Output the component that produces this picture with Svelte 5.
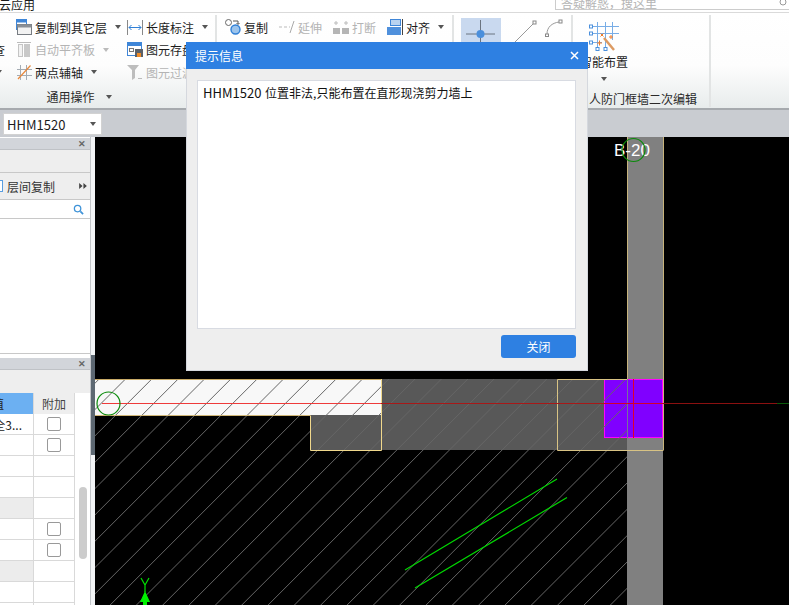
<script>
  // hatch lines of the floor slab, x + y = const
  const hatch = [];
  for (let c = 583.500 - 26.330 * 8; c < 1250; c += 26.330) hatch.push(c);

  const rows = [
    { check: true, text: '全3...' },
    { check: true },
    {},
    {},
    { shade: true },
    { check: true },
    { check: true },
    { shade: true },
    {},
    {}
  ];
</script>

<div class="app">
  <header class="titlebar">
    <span class="app-name">云应用</span>
    <div class="search">
      <span>答疑解惑，搜这里</span>
      <svg class="search-ico" viewBox="0 0 10 10"><circle cx="4" cy="2" r="3" fill="none" stroke="#999" /></svg>
    </div>
  </header>

  <section class="ribbon">
    <div class="group g1">
      <div class="g1-grid">
        <span></span>
        <div class="item">
          <svg class="ico" viewBox="0 0 16 16"><rect x="0.500" y="0.500" width="10" height="10" fill="#fff" stroke="#3f86d8" /><rect x="0.500" y="0.500" width="10" height="3" fill="#3f86d8" /><rect x="1.500" y="5.500" width="14" height="10" fill="#f2f2f2" stroke="#777c82" /><rect x="1.500" y="5.500" width="14" height="3" fill="#8a8f96" /></svg>
          <span>复制到其它层</span><i class="caret"></i>
        </div>
        <div class="item">
          <svg class="ico" viewBox="0 0 16 16"><path d="M0.500 1v15M15.500 1v15" stroke="#888" fill="none" /><path d="M2 8.500h12M4.500 6l-2.500 2.500 2.500 2.500M11.500 6l2.500 2.500-2.500 2.500" stroke="#2f7fd6" fill="none" /></svg>
          <span>长度标注</span><i class="caret"></i>
        </div>

        <span class="stray">查</span>
        <div class="item off">
          <svg class="ico" viewBox="0 0 16 16"><path d="M1 0.500h14" stroke="#bbb" /><rect x="2.500" y="2.500" width="4" height="12" fill="#f2f2f2" stroke="#c4c4c4" /><rect x="8" y="2" width="6" height="13" fill="#c8c8c8" /></svg>
          <span>自动平齐板</span><i class="caret light"></i>
        </div>
        <div class="item">
          <svg class="ico" viewBox="0 0 16 16"><rect x="0.500" y="0.500" width="14" height="13" fill="#fff" stroke="#3f86d8" /><rect x="0.500" y="0.500" width="14" height="3.500" fill="#3f86d8" /><rect x="2.500" y="6.500" width="4" height="3" fill="#fff" stroke="#777" /><rect x="8" y="7" width="8" height="8" fill="#5a6068" /><rect x="10" y="11" width="4" height="4" fill="#f08a24" /></svg>
          <span>图元存盘</span>
        </div>

        <span class="stray-caret"><i class="caret"></i></span>
        <div class="item">
          <svg class="ico" viewBox="0 0 16 16"><path d="M1 5.500h15M1 11.500h15M4.500 1v15M10.500 1v15" stroke="#a4acb4" fill="none" /><path d="M2 15L14.500 1.500" stroke="#e8873a" fill="none" stroke-width="1.200" /></svg>
          <span>两点辅轴</span><i class="caret"></i>
        </div>
        <div class="item off">
          <svg class="ico" viewBox="0 0 16 16"><path d="M0 1h12L8 6v8L5 16V6z" fill="#bdbdbd" /><path d="M11 14.500h4" stroke="#bbb" /></svg>
          <span>图元过滤</span>
        </div>
      </div>
      <div class="group-label label-g1">通用操作<i class="caret"></i></div>
    </div>

    <div class="group g2">
      <div class="g2-row">
        <div class="item">
          <svg class="ico" viewBox="0 0 16 16"><circle cx="3.500" cy="3.500" r="3" fill="#fff" stroke="#666" /><circle cx="10.500" cy="10.500" r="4.500" fill="#9cc4ec" stroke="#2f7fd6" stroke-width="1.400" /><path d="M8 2h5v3M11.500 4l1.500 1.500 1.500-1.500" fill="none" stroke="#555" /></svg>
          <span>复制</span>
        </div>
        <div class="item off">
          <svg class="ico" viewBox="0 0 16 16"><path d="M0 8h3M5 8h3M10 8h1" stroke="#bbb" /><path d="M11 14L15 2" stroke="#aaa" /></svg>
          <span>延伸</span>
        </div>
        <div class="item off">
          <svg class="ico" viewBox="0 0 16 16"><rect x="0" y="9" width="7" height="6" fill="#b5b5b5" /><rect x="9" y="9" width="7" height="6" fill="#b5b5b5" /><path d="M3 2v4M13 2v4M1 4h4M11 4h4" stroke="#bbb" /></svg>
          <span>打断</span>
        </div>
        <div class="item">
          <svg class="ico" viewBox="0 0 16 16"><rect x="3.500" y="0.500" width="10" height="6" fill="#b9d3f0" stroke="#3f86d8" /><rect x="0" y="8" width="14" height="8" fill="#4f90dc" /><path d="M15.500 0v16" stroke="#444" /></svg>
          <span>对齐</span><i class="caret"></i>
        </div>
      </div>
    </div>

    <div class="group g3">
      <div class="snap">
        <svg class="snap-ico" viewBox="0 0 40 26"><path d="M5 16h29M19.500 2v22" stroke="#6b7480" fill="none" /><circle cx="19.500" cy="16" r="4" fill="#4a8fdc" /></svg>
      </div>
      <svg class="line-ico" viewBox="0 0 24 24"><path d="M1 23L20 4" stroke="#999" fill="none" /><rect x="20" y="1" width="3" height="3" fill="#fff" stroke="#888" /></svg>
      <svg class="arc-ico" viewBox="0 0 18 18"><path d="M2 15C2 8 7 4 14 3" stroke="#999" fill="none" /><rect x="0.500" y="15" width="3" height="2.500" fill="#fff" stroke="#888" /><rect x="14" y="1" width="3" height="3" fill="#fff" stroke="#888" /></svg>
    </div>

    <div class="group g4">
      <div class="big">
        <svg class="big-ico" viewBox="0 0 30 30">
          <path d="M8.500 0v26M16.500 0v26M23.500 0v18M3 4.500h27M3 11.500h27M3 20.500h10" stroke="#78ade6" fill="none" />
          <g fill="#fff" stroke="#4a8fdc"><rect x="0.500" y="3" width="3" height="3" /><rect x="0.500" y="10" width="3" height="3" /><rect x="0.500" y="19" width="3" height="3" /><rect x="7" y="25.500" width="3" height="3" /><rect x="15" y="25.500" width="3" height="3" /></g>
          <path d="M15 16L25 28" stroke="#dc9a62" stroke-width="2.500" />
          <path d="M11.500 14.500l3-3M11.500 11.500l3 3M8 21h5M10.500 18.500v5M20 15h4M22 13v4" stroke="#ef7d2a" fill="none" />
        </svg>
        <span>智能布置</span>
        <i class="caret"></i>
      </div>
      <div class="group-label label-g4">人防门框墙二次编辑</div>
    </div>
  </section>

  <div class="combo-bar">
    <div class="combo"><span>HHM1520</span><i class="caret"></i></div>
  </div>

  <main class="main">
    <aside class="side">
      <div class="panel-top">
        <div class="panel-head"><span class="close-x">✕</span></div>
        <div class="grey-row"></div>
        <div class="tool-row">
          <span class="tool-check"></span>
          <span>层间复制</span>
          <svg class="more" viewBox="0 0 9 7"><path d="M0 0l4 3.500-4 3.500zM5 0l4 3.500-4 3.500z" fill="#444" /></svg>
        </div>
        <div class="filter">
          <svg class="filter-ico" viewBox="0 0 12 12"><circle cx="5" cy="5" r="3.500" fill="none" stroke="#3f93d8" stroke-width="1.400" /><path d="M8 8l3 3" stroke="#3f93d8" stroke-width="1.800" /></svg>
        </div>
        <div class="list"></div>
      </div>
      <div class="panel-gap"></div>
      <div class="panel-bottom">
        <div class="panel-head"><span class="close-x">✕</span></div>
        <div class="grey-row short"></div>
        <div class="table-wrap">
          <div class="table">
            <div class="cell th-blue"><span class="val">值</span></div>
            <div class="cell th">附加</div>
            {#each rows as row}
              <div class="cell" class:shade={row.shade}><span class="val">{row.text ?? ''}</span></div>
              <div class="cell center">
                {#if row.check}<span class="check"></span>{/if}
              </div>
            {/each}
          </div>
          <div class="scroll-track"><div class="scroll-thumb"></div></div>
        </div>
      </div>
    </aside>
    <div class="splitter"><div class="splitter-grip"></div></div>

    <div class="canvas">
      <svg class="cad" viewBox="95 137 694 468">
        <defs>
          <clipPath id="hatch-clip"><rect x="95" y="379" width="532" height="226" /></clipPath>
        </defs>

        <rect x="627" y="137" width="36" height="468" fill="#808080" />
        <path d="M627.500 137V379M663.500 137V450" stroke="#c8b47c" fill="none" />

        <rect x="95" y="379" width="286" height="36" fill="#f8f8f8" />
        <rect x="381" y="379" width="246" height="71" fill="#585858" />
        <rect x="310" y="415" width="71" height="35" fill="#585858" />
        <rect x="604.500" y="379.500" width="58" height="58" fill="#8000ff" stroke="#ff00ff" />

        <g clip-path="url(#hatch-clip)" stroke="#666" fill="none">
          {#each hatch as c}
            <line x1={c - 379} y1="379" x2={c - 605} y2="605" />
          {/each}
        </g>

        <path d="M95 379.500H381" stroke="#c9ab68" fill="none" />
        <path d="M95 415.500H310" stroke="#d0b676" fill="none" />
        <path d="M310.500 415.500V450.500H381.500V379" stroke="#f0d88c" fill="none" />
        <path d="M557.500 450.500V379.500H627M557.500 450.500H663.500" stroke="#d8c384" fill="none" />
        <path d="M627.500 379V438" stroke="#77719a" fill="none" />
        <path d="M633.500 379V438" stroke="#e0002a" fill="none" />
        <path d="M102 403.500H381" stroke="#ee3a3a" fill="none" />
        <path d="M381 403.500H604" stroke="#a81818" fill="none" />
        <path d="M604 403.500H663" stroke="#d0002a" fill="none" />
        <path d="M663 403.500H777" stroke="#8a1010" fill="none" />
        <path d="M777 403.500H789" stroke="#0a5a0a" fill="none" />

        <circle cx="108.500" cy="403.500" r="11.500" fill="none" stroke="#0a8a0a" stroke-width="1.200" />
        <text x="614" y="155.500" class="axis-label">B-20</text>
        <circle cx="633.500" cy="150" r="11.500" fill="none" stroke="#0a8a0a" stroke-width="1.200" />

        <path d="M405 570L557 479M415 588L567 497.500" stroke="#00d800" stroke-width="1.200" fill="none" />

        <path d="M141 578L145 585L149 578M145 585V592" stroke="#00e000" stroke-width="1.200" fill="none" />
        <path d="M145 591L150 602H147V605H143V602H140Z" fill="#00f000" />
      </svg>
    </div>
  </main>

  <div class="dialog">
    <div class="dialog-head">
      <span>提示信息</span>
      <svg class="dialog-x" viewBox="0 0 9 9"><path d="M1 1l7 7M8 1l-7 7" stroke="#fff" stroke-width="1.500" /></svg>
    </div>
    <div class="dialog-body">
      <div class="message"><span class="latin">HHM1520</span> 位置非法,只能布置在直形现浇剪力墙上</div>
      <div class="dialog-foot"><button class="close-btn">关闭</button></div>
    </div>
  </div>
</div>

<style>
  :global(body) {
    margin: 0;
    background: #fff;
  }

  .app {
    position: relative;
    width: 789px;
    height: 605px;
    overflow: hidden;
    display: flex;
    flex-direction: column;
    font-family: "Noto Sans CJK SC", "Noto Sans", sans-serif;
    font-size: 12px;
    color: #1c1c1c;
  }

  .titlebar {
    height: 12px;
    flex: none;
    border-bottom: 1px solid #dadada;
    display: flex;
    justify-content: space-between;
    overflow: hidden;
    background: #fff;
  }

  .app-name {
    line-height: 9px;
    margin-left: -1px;
  }

  .search {
    width: 234px;
    border-left: 1px solid #ccc;
    border-bottom: 1px solid #ccc;
    color: #b4b4b4;
    line-height: 5px;
    padding-left: 5px;
    box-sizing: border-box;
    height: 10px;
    display: flex;
    justify-content: space-between;
  }

  .search-ico {
    width: 10px;
    height: 10px;
    flex: none;
  }

  .ribbon {
    height: 97px;
    flex: none;
    display: flex;
    box-sizing: border-box;
    border-bottom: 2px solid #a6aaae;
    background: linear-gradient(#fff 0, #fdfdfd 55%, #e8ecec 100%);
  }

  .group {
    box-sizing: border-box;
    border-right: 2px solid #e2e4e4;
    margin: 2px 0 1px;
    flex: none;
    display: flex;
    flex-direction: column;
  }

  .g1 {
    width: 217px;
  }

  .g1-grid {
    display: grid;
    grid-template-columns: 16px 111px auto;
    grid-auto-rows: 22.500px;
    margin-top: 1px;
    flex: 1;
  }

  .group-label {
    height: 20px;
    line-height: 20px;
    text-align: center;
    white-space: nowrap;
    display: flex;
    align-items: center;
    justify-content: center;
    gap: 6px;
    color: #2a2a2a;
  }

  .label-g1 {
    width: 122px;
    margin-left: 18px;
  }

  .label-g4 {
    margin-bottom: -2px;
    padding-left: 4px;
  }

  .item {
    display: flex;
    align-items: center;
    gap: 3px;
    white-space: nowrap;
  }

  .item.off {
    color: #b4b4b4;
  }

  .ico {
    width: 16px;
    height: 16px;
    flex: none;
  }

  .caret {
    display: inline-block;
    width: 0;
    height: 0;
    border-left: 3.500px solid transparent;
    border-right: 3.500px solid transparent;
    border-top: 4px solid #555;
    margin-left: 5px;
    flex: none;
  }

  .caret.light {
    border-top-color: #bbb;
  }

  .stray {
    margin-left: -7px;
    line-height: 22px;
  }

  .stray-caret {
    margin-left: -9px;
    display: flex;
    align-items: center;
  }

  .g2 {
    width: 237px;
  }

  .g2-row {
    display: flex;
    height: 22.500px;
    margin-top: 1px;
    padding-left: 8px;
    gap: 9px;
  }

  .g2-row .item {
    width: 45px;
  }

  .g3 {
    width: 119px;
    flex-direction: row;
    align-items: flex-start;
  }

  .snap {
    width: 40px;
    height: 30px;
    margin: 3px 0 0 7px;
    background: #c9d9ef;
  }

  .snap-ico {
    width: 40px;
    height: 26px;
    display: block;
  }

  .line-ico {
    width: 24px;
    height: 24px;
    margin: 5px 0 0 12px;
    flex: none;
  }

  .arc-ico {
    width: 18px;
    height: 18px;
    margin: 4px 0 0 8px;
    flex: none;
  }

  .g4 {
    width: 138px;
  }

  .big {
    width: 64px;
    margin-left: -1px;
    display: flex;
    flex-direction: column;
    align-items: center;
    flex: 1;
    padding-top: 7px;
  }

  .big-ico {
    width: 30px;
    height: 30px;
    flex: none;
  }

  .big span {
    line-height: 20px;
    white-space: nowrap;
  }

  .big .caret {
    margin: 5px 0 0;
  }

  .combo-bar {
    height: 27px;
    flex: none;
    background: #c9ccd1;
    padding: 3px 0 0 3px;
    box-sizing: border-box;
  }

  .combo {
    width: 99px;
    height: 22px;
    box-sizing: border-box;
    background: #fff;
    border: 1px solid #d2d2d2;
    display: flex;
    align-items: center;
    justify-content: space-between;
    padding: 0 5px 0 3px;
    font-size: 13px;
  }

  .main {
    flex: 1;
    display: flex;
    min-height: 0;
  }

  .side {
    width: 91px;
    flex: none;
    box-sizing: border-box;
    border-right: 1px solid #c2c5c9;
    display: flex;
    flex-direction: column;
    overflow: hidden;
  }

  .panel-top {
    height: 216px;
    flex: none;
    display: flex;
    flex-direction: column;
    border-bottom: 1px solid #c8c8c8;
  }

  .panel-gap {
    height: 4px;
    flex: none;
  }

  .panel-head {
    height: 12px;
    box-sizing: border-box;
    margin-top: 1px;
    flex: none;
    background: #d2d5da;
    border-bottom: 1px solid #bfc2c6;
    display: flex;
    justify-content: flex-end;
    padding-right: 4px;
  }

  .close-x {
    font-size: 9px;
    line-height: 11px;
    color: #666;
    font-weight: 700;
  }

  .grey-row {
    height: 22px;
    flex: none;
    background: #eee;
    border-bottom: 1px solid #c8c8c8;
  }

  .grey-row.short {
    border-bottom: 0;
    height: 23px;
  }

  .tool-row {
    height: 27px;
    flex: none;
    box-sizing: border-box;
    background: #eee;
    border-bottom: 1px solid #c8c8c8;
    display: flex;
    align-items: center;
    padding-right: 3px;
    color: #333;
  }

  .tool-check {
    width: 2px;
    height: 10px;
    border: 1px solid #5a9ee0;
    border-left: 0;
    margin-right: 4px;
    background: #fff;
  }

  .more {
    margin-left: auto;
    width: 8px;
    height: 6px;
  }

  .filter {
    height: 19px;
    flex: none;
    box-sizing: border-box;
    border-bottom: 1px solid #c8c8c8;
    display: flex;
    justify-content: flex-end;
    align-items: center;
    padding-right: 6px;
  }

  .filter-ico {
    width: 11px;
    height: 11px;
  }

  .list {
    flex: 1;
    background: #fff;
  }

  .panel-bottom {
    flex: 1;
    display: flex;
    flex-direction: column;
    min-height: 0;
  }

  .panel-bottom .panel-head {
    margin-top: 0;
  }

  .table-wrap {
    display: flex;
    flex: 1;
    min-height: 0;
  }

  .table {
    width: 75px;
    flex: none;
    display: grid;
    grid-template-columns: 34px 41px;
    grid-auto-rows: 21px;
    align-content: start;
  }

  .cell {
    box-sizing: border-box;
    border-right: 1px solid #d9d9d9;
    border-bottom: 1px solid #d9d9d9;
    display: flex;
    align-items: center;
    justify-content: flex-end;
    overflow: hidden;
    white-space: nowrap;
    color: #222;
  }

  .cell.center {
    justify-content: center;
  }

  .cell.shade {
    background: #ececec;
  }

  .th-blue {
    background: #6cb0f2;
    border-bottom: 0;
    justify-content: flex-start;
  }

  .th {
    background: #eee;
    justify-content: center;
    color: #444;
    border-bottom: 0;
  }

  .val {
    display: block;
    flex: none;
    margin-right: 11px;
  }

  .th-blue .val {
    margin: 0 0 0 -8px;
  }

  .check {
    width: 14px;
    height: 14px;
    box-sizing: border-box;
    border: 1px solid #999;
    border-radius: 2px;
    background: #fff;
  }

  .scroll-track {
    flex: 1;
    padding: 94px 3px 0 4px;
  }

  .scroll-thumb {
    height: 72px;
    border-radius: 4px;
    background: #ccc;
  }

  .splitter {
    width: 4px;
    flex: none;
    background: #f2f4f6;
    padding-top: 218px;
    box-sizing: border-box;
  }

  .splitter-grip {
    height: 100px;
    background: #5d6872;
  }

  .canvas {
    flex: 1;
    position: relative;
    background: #000;
    overflow: hidden;
  }

  .cad {
    position: absolute;
    inset: 0;
    width: 694px;
    height: 468px;
    display: block;
  }

  .axis-label {
    font-family: "Liberation Sans", sans-serif;
    font-size: 17px;
    fill: #fff;
  }

  .dialog {
    position: absolute;
    left: 186px;
    top: 42px;
    width: 402px;
    height: 329px;
    box-sizing: border-box;
    background: #eee;
    border: 1px solid #d5d8de;
    border-top: 0;
    display: flex;
    flex-direction: column;
  }

  .dialog-head {
    height: 27px;
    flex: none;
    background: #2e80e2;
    color: #fff;
    font-size: 12px;
    display: flex;
    align-items: center;
    justify-content: space-between;
    padding: 0 9px 0 9px;
    margin: 0 -1px;
  }

  .dialog-x {
    width: 9px;
    height: 9px;
  }

  .dialog-body {
    flex: 1;
    display: flex;
    flex-direction: column;
    padding: 11px 11px 11px 10px;
    min-height: 0;
  }

  .message {
    height: 249px;
    box-sizing: border-box;
    flex: none;
    background: #fff;
    border: 1px solid #d8dbe2;
    padding: 3px 5px;
    line-height: 18px;
    color: #111;
    word-spacing: 1px;
  }

  .latin {
    font-size: 13px;
  }

  .dialog-foot {
    display: flex;
    justify-content: flex-end;
    margin-top: 6px;
  }

  .close-btn {
    width: 75px;
    height: 23px;
    padding: 0;
    border: 0;
    border-radius: 3px;
    background: #2e80e2;
    color: #fff;
    font: inherit;
  }
</style>
